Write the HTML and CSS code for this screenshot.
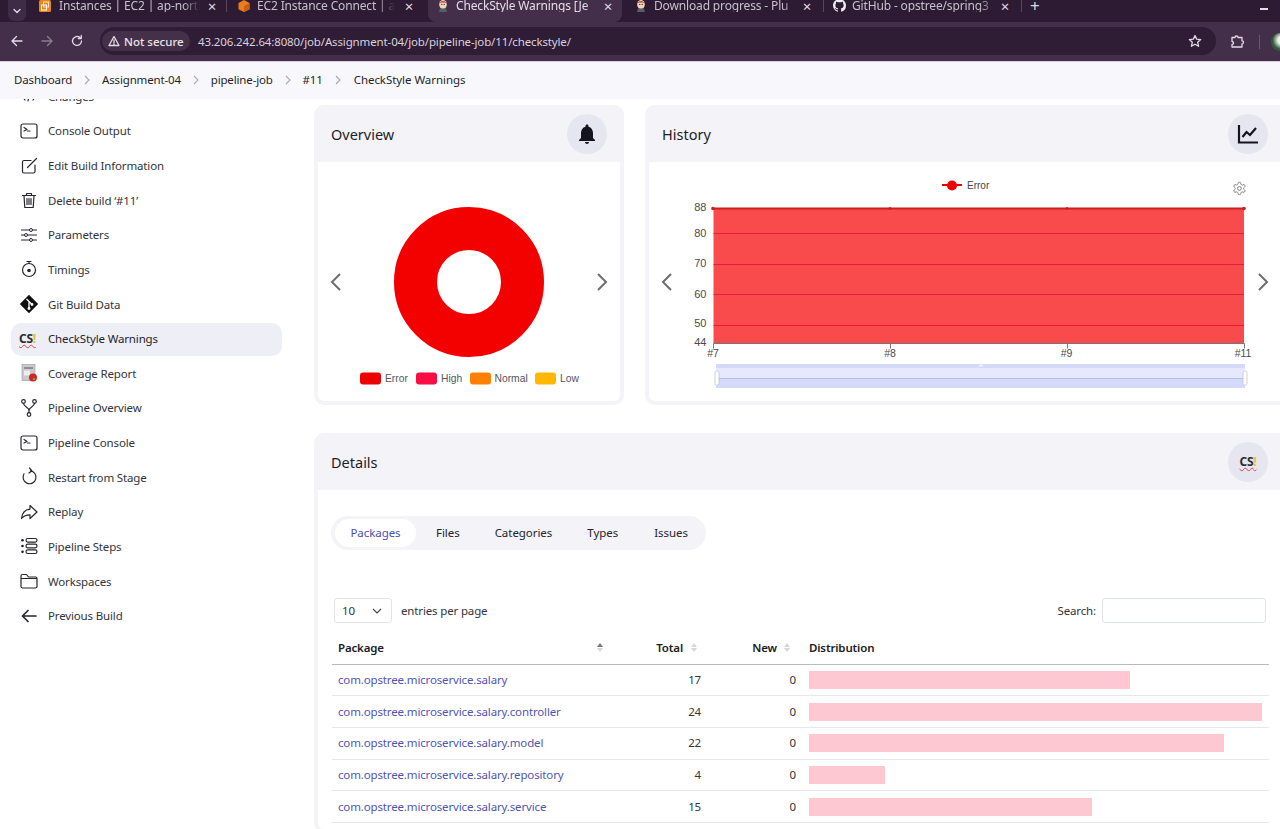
FILE: index.html
```html
<!DOCTYPE html>
<html lang="en">
<head>
<meta charset="utf-8">
<title>CheckStyle Warnings</title>
<link rel="stylesheet" href="styles.css">
</head>
<body>
<header class="chrome">
  <div class="tabstrip">
    <span class="tablist-btn"><svg width="10" height="10" viewBox="0 0 10 10"><path d="M2 3.5 5 6.5 8 3.5" class="s-light"/></svg></span>
    <div class="tab tab-1">
      <svg class="fav" viewBox="0 0 12 12"><rect width="12" height="12" rx="1.5" fill="#e8861c"/><rect x="4.5" y="2" width="5" height="5" fill="none" stroke="#fbe3c2"/><rect x="2.5" y="5" width="5" height="5" fill="none" stroke="#fff"/></svg>
      <span class="tab-title">Instances | EC2 | ap-north</span><span class="tab-x">×</span>
    </div>
    <i class="tab-sep"></i>
    <div class="tab tab-2">
      <svg class="fav" viewBox="0 0 12 12"><path d="M6 0 11.5 3v6.2L6 12 .5 9.2V3z" fill="#ed7d1c"/><path d="M6 6 11.5 3v6.2L6 12z" fill="#c9600f"/></svg>
      <span class="tab-title">EC2 Instance Connect | a</span><span class="tab-x">×</span>
    </div>
    <div class="tab tab-3 tab-active">
      <svg class="fav" viewBox="0 0 12 12"><ellipse cx="6" cy="4.5" rx="3.8" ry="4.5" fill="#f0d6b5"/><path d="M2.5 3C3 .5 9 .5 9.5 3L8 2.5H4z" fill="#a33"/><path d="M3 8.5h6L10 12H2z" fill="#54606e"/><circle cx="4.8" cy="4.4" r=".6" fill="#222"/><circle cx="7.2" cy="4.4" r=".6" fill="#222"/></svg>
      <span class="tab-title">CheckStyle Warnings [Je</span><span class="tab-x">×</span>
    </div>
    <div class="tab tab-4">
      <svg class="fav" viewBox="0 0 12 12"><ellipse cx="6" cy="4.5" rx="3.8" ry="4.5" fill="#f0d6b5"/><path d="M2.5 3C3 .5 9 .5 9.5 3L8 2.5H4z" fill="#a33"/><path d="M3 8.5h6L10 12H2z" fill="#54606e"/><circle cx="4.8" cy="4.4" r=".6" fill="#222"/><circle cx="7.2" cy="4.4" r=".6" fill="#222"/></svg>
      <span class="tab-title">Download progress - Plu</span><span class="tab-x">×</span>
    </div>
    <i class="tab-sep"></i>
    <div class="tab tab-5">
      <svg class="fav fav-gh" viewBox="0 0 16 16"><path fill="#eee" d="M8 0C3.58 0 0 3.58 0 8c0 3.54 2.29 6.53 5.47 7.59.4.07.55-.17.55-.38 0-.19-.01-.82-.01-1.49-2.01.37-2.53-.49-2.69-.94-.09-.23-.48-.94-.82-1.13-.28-.15-.68-.52-.01-.53.63-.01 1.08.58 1.23.82.72 1.21 1.87.87 2.33.66.07-.52.28-.87.51-1.07-1.78-.2-3.64-.89-3.64-3.95 0-.87.31-1.59.82-2.15-.08-.2-.36-1.02.08-2.12 0 0 .67-.21 2.2.82.64-.18 1.32-.27 2-.27s1.36.09 2 .27c1.53-1.04 2.2-.82 2.2-.82.44 1.1.16 1.92.08 2.12.51.56.82 1.27.82 2.15 0 3.07-1.87 3.75-3.65 3.95.29.25.54.73.54 1.48 0 1.07-.01 1.93-.01 2.2 0 .21.15.46.55.38A8.013 8.013 0 0 0 16 8c0-4.42-3.58-8-8-8z"/></svg>
      <span class="tab-title">GitHub - opstree/spring3</span><span class="tab-x">×</span>
    </div>
    <i class="tab-sep"></i>
    <span class="tab-new">+</span>
    <i class="win-min"></i>
  </div>
  <div class="toolbar">
    <svg class="tb-ico" width="14" height="14" viewBox="0 0 14 14"><path d="M12 7H2M6.5 2.5 2 7l4.5 4.5" class="s-light"/></svg>
    <svg class="tb-ico tb-fwd" width="14" height="14" viewBox="0 0 14 14"><path d="M2 7h10M7.500 2.500 12 7l-4.500 4.500" class="s-dim"/></svg>
    <svg class="tb-ico" width="14" height="14" viewBox="0 0 14 14"><path d="M11.500 7A4.500 4.500 0 1 1 10 3.600M11.300 1.500v3h-3" class="s-light"/></svg>
    <div class="omnibox">
      <span class="chip"><svg width="12" height="12" viewBox="0 0 12 12"><path d="M6 1.500 11 10.500H1zM6 5v2.800M6 8.800v.7" class="s-light"/></svg>Not secure</span>
      <span class="url">43.206.242.64:8080/job/Assignment-04/job/pipeline-job/11/checkstyle/</span>
      <svg class="star" width="14" height="14" viewBox="0 0 14 14"><path d="M7 1.500 8.700 5.200l4 .4-3 2.700.9 4L7 10.200l-3.600 2.100.9-4-3-2.700 4-.4z" class="s-light"/></svg>
    </div>
    <svg class="ext" width="16" height="16" viewBox="0 0 16 16"><path d="M3 3.500h3a1.500 1.500 0 0 1 3 0h4v3.300a1.500 1.500 0 0 1 0 3V13H3v-2.500a1.500 1.500 0 0 0 0-3z" class="s-light"/></svg>
    <i class="tb-sep"></i>
    <span class="avatar"></span>
  </div>
</header>

<nav class="crumbs">
  <a class="crumb">Dashboard</a><span class="sepch"><svg width="6" height="10" viewBox="0 0 6 10"><path d="M1 1l4 4-4 4"/></svg></span>
  <a class="crumb">Assignment-04</a><span class="sepch"><svg width="6" height="10" viewBox="0 0 6 10"><path d="M1 1l4 4-4 4"/></svg></span>
  <a class="crumb">pipeline-job</a><span class="sepch"><svg width="6" height="10" viewBox="0 0 6 10"><path d="M1 1l4 4-4 4"/></svg></span>
  <a class="crumb">#11</a><span class="sepch sepch-last"><svg width="6" height="10" viewBox="0 0 6 10"><path d="M1 1l4 4-4 4"/></svg></span>
  <a class="crumb crumb-last">CheckStyle Warnings</a>
</nav>

<div class="page">
  <aside class="side">
    <ul class="menu">
      <li class="item"><svg class="ico" viewBox="0 0 20 20"><path d="M6 6 3 10l3 4M14 6l3 4-3 4M11 5 9 15" class="s-dark"/></svg>Changes</li>
      <li class="item"><svg class="ico" viewBox="0 0 20 20"><rect x="2" y="3" width="16" height="14" rx="2" class="s-dark"/><path d="M5 6.500 8 8.500 5 10M8.500 10H11" class="s-dark"/></svg>Console Output</li>
      <li class="item"><svg class="ico" viewBox="0 0 20 20"><path d="M12 4.500H5a1.500 1.500 0 0 0-1.500 1.500v9.500A1.500 1.500 0 0 0 5 17h9.500a1.500 1.500 0 0 0 1.500-1.500V9M8.500 11.500 17.500 2.500" class="s-dark"/></svg>Edit Build Information</li>
      <li class="item"><svg class="ico" viewBox="0 0 20 20"><path d="M3.500 5.500h13M7.500 5.500V3.500h5v2M5 5.500 5.800 17.500h8.400L15 5.500M8 8.500v6M10 8.500v6M12 8.500v6" class="s-dark"/></svg>Delete build ‘#11’</li>
      <li class="item"><svg class="ico" viewBox="0 0 20 20"><path d="M2.500 5h15M2.500 10h15M2.500 15h15" class="s-dark"/><circle cx="12" cy="5" r="1.500" class="dot"/><circle cx="7" cy="10" r="1.500" class="dot"/><circle cx="12" cy="15" r="1.500" class="dot"/></svg>Parameters</li>
      <li class="item"><svg class="ico" viewBox="0 0 20 20"><circle cx="10" cy="11" r="6.500" class="s-dark"/><path d="M8 2.500h4M10 2.500v2" class="s-dark"/><circle cx="10" cy="11.500" r="1.800" fill="#222"/></svg>Timings</li>
      <li class="item"><svg class="ico" viewBox="0 0 20 20"><path d="M10 .8 19.200 10 10 19.200.8 10z" fill="#111"/><path d="M7.500 5 13 10.500M10 8v6.500" stroke="#fff" stroke-width="1.300" fill="none"/><circle cx="10" cy="14.500" r="1.400" fill="#fff"/><circle cx="13" cy="10.500" r="1.400" fill="#fff"/></svg>Git Build Data</li>
      <li class="item item-active"><span class="cs cs-side">CS<b>!</b></span>CheckStyle Warnings</li>
      <li class="item"><svg class="ico" viewBox="0 0 20 20"><rect x="3" y="1.500" width="13" height="16" fill="#c9c9c9" stroke="#999" stroke-width=".6"/><rect x="5" y="4" width="9" height="2" fill="#8f8f8f"/><rect x="5" y="7.500" width="6" height="5" fill="#eee"/><circle cx="14" cy="14.500" r="4" fill="#d3222a"/><circle cx="15" cy="16" r="1.300" fill="#7a9b30"/></svg>Coverage Report</li>
      <li class="item"><svg class="ico" viewBox="0 0 20 20"><circle cx="4.500" cy="3.500" r="1.800" class="s-dark"/><circle cx="15.500" cy="3.500" r="1.800" class="s-dark"/><circle cx="10" cy="16.500" r="1.800" class="s-dark"/><path d="M4.500 5.300C4.500 9 10 9 10 12.500v2.200M15.500 5.300C15.500 9 10 9 10 12.500" class="s-dark"/></svg>Pipeline Overview</li>
      <li class="item"><svg class="ico" viewBox="0 0 20 20"><rect x="2" y="3" width="16" height="14" rx="2" class="s-dark"/><path d="M5 6.500 8 8.500 5 10M8.500 10H11" class="s-dark"/></svg>Pipeline Console</li>
      <li class="item"><svg class="ico" viewBox="0 0 20 20"><path d="M11.500 3.800A6.500 6.500 0 1 1 5 6.800M10.500 1 13 3.800 10 6" class="s-dark"/></svg>Restart from Stage</li>
      <li class="item"><svg class="ico" viewBox="0 0 20 20"><path d="M11 3.500 18 10l-7 6.500v-3.700C7 12.800 4.500 14 2.500 16.500 3 11 6 7.800 11 7.200z" class="s-dark"/></svg>Replay</li>
      <li class="item"><svg class="ico" viewBox="0 0 20 20"><rect x="7" y="2.500" width="11" height="3.600" rx="1.800" class="s-dark"/><rect x="7" y="8.200" width="11" height="3.600" rx="1.800" class="s-dark"/><rect x="7" y="13.900" width="11" height="3.600" rx="1.800" class="s-dark"/><circle cx="3.500" cy="4.300" r="1.300" fill="#222"/><circle cx="3.500" cy="10" r="1.300" fill="#222"/><circle cx="3.500" cy="15.700" r="1.300" fill="#222"/></svg>Pipeline Steps</li>
      <li class="item"><svg class="ico" viewBox="0 0 20 20"><path d="M2 5a1.500 1.500 0 0 1 1.500-1.500h4L9.500 6h7A1.500 1.500 0 0 1 18 7.500v8a1.500 1.500 0 0 1-1.500 1.500h-13A1.500 1.500 0 0 1 2 15.500zM2 7.500h16" class="s-dark"/></svg>Workspaces</li>
      <li class="item"><svg class="ico" viewBox="0 0 20 20"><path d="M17 10H3.500M9 4.500 3.500 10 9 15.500" class="s-dark s-thick"/></svg>Previous Build</li>
    </ul>
  </aside>

  <main class="main">
    <div class="top-cards">
      <section class="card card-overview">
        <div class="card-head"><h2>Overview</h2>
          <span class="round"><svg width="24" height="24" viewBox="0 0 24 24"><path fill="#14141f" d="M12 22c1.100 0 2-.9 2-2h-4c0 1.100.9 2 2 2zm6-6v-5c0-3.070-1.630-5.640-4.500-6.320V4c0-.83-.67-1.500-1.500-1.500s-1.500.67-1.500 1.500v.68C7.630 5.360 6 7.920 6 11v5l-2 2v1h16v-1l-2-2z"/></svg></span>
        </div>
        <div class="card-body">
          <svg class="chart" width="302" height="239" viewBox="318 162 302 239">
            <circle cx="469" cy="282" r="53.500" fill="none" stroke="#f30000" stroke-width="43"/>
            <rect x="360" y="372.500" width="21" height="12" rx="3" fill="#ee0000"/><text x="385" y="382" class="lg">Error</text>
            <rect x="416" y="372.500" width="21" height="12" rx="3" fill="#f80d45"/><text x="441" y="382" class="lg">High</text>
            <rect x="470" y="372.500" width="21" height="12" rx="3" fill="#ff8000"/><text x="494.500" y="382" class="lg">Normal</text>
            <rect x="535" y="372.500" width="21" height="12" rx="3" fill="#ffb700"/><text x="560" y="382" class="lg">Low</text>
          </svg>
          <svg class="chev chev-l" width="14" height="20" viewBox="0 0 14 20"><path d="M11 2 3 10l8 8"/></svg>
          <svg class="chev chev-r" width="14" height="20" viewBox="0 0 14 20"><path d="M3 2l8 8-8 8"/></svg>
        </div>
      </section>
      <section class="card card-history">
        <div class="card-head"><h2>History</h2>
          <span class="round round-hist"><svg width="24" height="24" viewBox="0 0 24 24"><path d="M3 3v17.500h19M6.500 15l4-5 3.500 3 6-7" fill="none" stroke="#14141f" stroke-width="2.200"/></svg></span>
        </div>
        <div class="card-body">
          <svg class="chart" width="631" height="239" viewBox="649 162 631 239">
            <path d="M942 185h20" stroke="#e60000" stroke-width="2"/><circle cx="952" cy="185.500" r="5" fill="#ee0000"/>
            <text x="967" y="189" class="lg lg-s">Error</text>
            <g transform="translate(1232 181) scale(.62)" fill="none" stroke="#777" stroke-width="1.500"><path d="M12.220 2h-.44a2 2 0 0 0-2 2v.18a2 2 0 0 1-1 1.730l-.43.25a2 2 0 0 1-2 0l-.15-.08a2 2 0 0 0-2.730.73l-.22.38a2 2 0 0 0 .73 2.730l.15.1a2 2 0 0 1 1 1.720v.51a2 2 0 0 1-1 1.740l-.15.09a2 2 0 0 0-.73 2.730l.22.38a2 2 0 0 0 2.730.73l.15-.08a2 2 0 0 1 2 0l.43.25a2 2 0 0 1 1 1.730V20a2 2 0 0 0 2 2h.44a2 2 0 0 0 2-2v-.18a2 2 0 0 1 1-1.730l.43-.25a2 2 0 0 1 2 0l.15.08a2 2 0 0 0 2.730-.73l.22-.39a2 2 0 0 0-.73-2.730l-.15-.08a2 2 0 0 1-1-1.740v-.5a2 2 0 0 1 1-1.740l.15-.09a2 2 0 0 0 .73-2.730l-.22-.38a2 2 0 0 0-2.730-.73l-.15.08a2 2 0 0 1-2 0l-.43-.25a2 2 0 0 1-1-1.730V4a2 2 0 0 0-2-2z"/><circle cx="12" cy="12" r="3"/></g>
            <rect x="713.500" y="208" width="530.500" height="135.500" fill="#f94b4c"/>
            <path d="M713.500 233.500H1244M713.500 264.500H1244M713.500 294.500H1244M713.500 325.500H1244" stroke="#ee1a3c" stroke-width="1"/>
            <path d="M713 208.500H1244" stroke="#c92020" stroke-width="2"/>
            <path d="M713.500 343.500H1244.500M713.500 343.500v5M890.500 343.500v5M1067.500 343.500v5M1244.500 343.500v5" stroke="#777" stroke-width="1" fill="none"/>
            <circle cx="713" cy="208.500" r="1.800" fill="#c92020"/><circle cx="890" cy="208.500" r="1.500" fill="#c92020"/><circle cx="1067" cy="208.500" r="1.500" fill="#c92020"/><circle cx="1244" cy="208.500" r="1.800" fill="#c92020"/>
            <g class="ax ax-y"><text x="706.500" y="211">88</text><text x="706.500" y="237">80</text><text x="706.500" y="267">70</text><text x="706.500" y="298">60</text><text x="706.500" y="327">50</text><text x="706.500" y="346">44</text></g>
            <g class="ax ax-x"><text x="713" y="357">#7</text><text x="890" y="357">#8</text><text x="1066.500" y="357">#9</text><text x="1243" y="357">#11</text></g>
            <rect x="716" y="364" width="529" height="24" fill="#d5dafb"/>
            <rect x="716" y="368" width="529" height="10" fill="#e6e9fe"/>
            <path d="M716 378.500H1245" stroke="#b6bdea"/>
            <rect x="979" y="364.500" width="4" height="2" fill="#eef0ff"/>
            <rect x="715" y="371" width="4" height="14" rx="1.500" fill="#fff" stroke="#b8bdd0" stroke-width=".7"/>
            <rect x="1243" y="371" width="4" height="14" rx="1.500" fill="#fff" stroke="#b8bdd0" stroke-width=".7"/>
          </svg>
          <svg class="chev chev-l chev-hl" width="14" height="20" viewBox="0 0 14 20"><path d="M11 2 3 10l8 8"/></svg>
          <svg class="chev chev-r chev-hr" width="14" height="20" viewBox="0 0 14 20"><path d="M3 2l8 8-8 8"/></svg>
        </div>
      </section>
    </div>

    <section class="card card-details">
      <div class="card-head"><h2>Details</h2>
        <span class="round round-det"><span class="cs">CS<b>!</b></span></span>
      </div>
      <div class="details-body">
        <div class="pills">
          <a class="pill pill-active">Packages</a><a class="pill">Files</a><a class="pill">Categories</a><a class="pill">Types</a><a class="pill">Issues</a>
        </div>
        <div class="controls">
          <div class="entries"><span class="select">10<svg width="10" height="6" viewBox="0 0 10 6"><path d="M1 1l4 4 4-4" fill="none" stroke="#444" stroke-width="1.100"/></svg></span><span>entries per page</span></div>
          <div class="search"><span>Search:</span><span class="input"></span></div>
        </div>
        <table class="grid">
          <colgroup><col class="c-pkg"><col class="c-tot"><col class="c-new"><col></colgroup>
          <thead><tr>
            <th><span class="thf">Package<span class="sort sort-asc"><i></i><i></i></span></span></th>
            <th class="num"><span class="thr">Total<span class="sort"><i></i><i></i></span></span></th>
            <th class="num"><span class="thr thr-new">New<span class="sort"><i></i><i></i></span></span></th>
            <th>Distribution</th>
          </tr></thead>
          <tbody>
            <tr><td><a>com.opstree.microservice.salary</a></td><td class="num">17</td><td class="num">0</td><td><div class="bar" style="width:70.83%"></div></td></tr>
            <tr><td><a>com.opstree.microservice.salary.controller</a></td><td class="num">24</td><td class="num">0</td><td><div class="bar" style="width:100%"></div></td></tr>
            <tr><td><a>com.opstree.microservice.salary.model</a></td><td class="num">22</td><td class="num">0</td><td><div class="bar" style="width:91.67%"></div></td></tr>
            <tr><td><a>com.opstree.microservice.salary.repository</a></td><td class="num">4</td><td class="num">0</td><td><div class="bar" style="width:16.67%"></div></td></tr>
            <tr><td><a>com.opstree.microservice.salary.service</a></td><td class="num">15</td><td class="num">0</td><td><div class="bar" style="width:62.5%"></div></td></tr>
          </tbody>
        </table>
      </div>
    </section>
  </main>
</div>
</body>
</html>
```

FILE: styles.css
```css
* { box-sizing: border-box; }
html, body { margin: 0; height: 829px; overflow: hidden; background: #fff; }
body { font-family: "Noto Sans", "Open Sans", sans-serif; font-size: 11.500px; letter-spacing: -.15px; color: #2b2b33; }
ul { list-style: none; margin: 0; padding: 0; }
h2 { margin: 0; font-weight: 400; font-size: 14.500px; letter-spacing: 0; color: #1d1d28; }

.s-light, .s-dim, .s-dark { fill: none; stroke-width: 1.300; stroke-linecap: round; stroke-linejoin: round; }
.s-light { stroke: #e3dbe6; }
.s-dim { stroke: #8b7d90; }
.s-dark { stroke: #26262e; stroke-width: 1.200; }
.s-thick { stroke-width: 1.700; }
.dot { fill: #fff; stroke: #26262e; stroke-width: 1; }

/* Browser chrome */
.chrome { height: 62px; background: #442f4b; border-bottom: 1px solid #d9cbdc; }
.tabstrip { height: 22px; background: #2c1b33; display: flex; align-items: flex-start; color: #c8bfcd; font-size: 12px; position: relative; }
.tablist-btn { width: 18px; height: 21px; margin-left: 8px; background: #3e2b45; border-radius: 0 0 6px 6px; display: flex; align-items: center; justify-content: center; }
.tab { display: flex; align-items: flex-start; height: 22px; line-height: 12px; flex: none; }
.tab .fav { width: 12px; height: 12px; flex: none; margin-right: 8px; }
.tab .fav-gh { width: 13px; height: 13px; margin-top: -1px; }
.tab-title { overflow: hidden; white-space: nowrap; flex: none; -webkit-mask-image: linear-gradient(90deg, #000 88%, transparent); mask-image: linear-gradient(90deg, #000 88%, transparent); }
.tab-x { font-size: 15px; color: #e0d8e4; width: 10px; text-align: center; margin-left: auto; }
.tab-sep { width: 1px; height: 12px; background: #5a4661; flex: none; }
.tab-1 { width: 187px; margin-left: 13px; padding-right: 9px; }
.tab-1 .tab-title { width: 141px; }
.tab-2 { width: 201px; padding-left: 11px; padding-right: 14px; }
.tab-2 .fav { margin-right: 7px; }
.tab-2 .tab-title { width: 138px; }
.tab-3 { width: 194px; padding-left: 9px; padding-right: 9px; background: #442f4b; color: #e4dde8; border-radius: 0 0 8px 8px; }
.tab-3 .fav { margin-right: 7px; }
.tab-3 .tab-title { width: 146px; }
.tab-4 { width: 201px; padding-left: 13px; padding-right: 11px; }
.tab-4 .fav { margin-right: 7px; }
.tab-4 .tab-title { width: 146px; }
.tab-5 { width: 197px; padding-left: 9px; padding-right: 11px; }
.tab-5 .fav { margin-right: 6px; }
.tab-5 .tab-title { width: 145px; }
.tab-new { font-size: 17px; line-height: 12px; margin-left: 8px; color: #ddd5e1; }
.win-min { width: 8px; height: 1.500px; background: #e6dfe9; position: absolute; left: 1260px; top: 8px; }

.toolbar { height: 39px; display: flex; align-items: center; padding-left: 10px; }
.tb-ico { margin-right: 16px; flex: none; margin-top: -1px; }
.omnibox { width: 1116px; height: 28px; margin-top: -1px; border-radius: 14px; background: #2f1c35; display: flex; align-items: center; padding-left: 2px; flex: none; color: #e0d9e4; }
.chip { width: 88px; height: 20px; background: #443049; border-radius: 10px; display: flex; align-items: center; gap: 4px; padding-left: 6px; font-size: 11.500px; letter-spacing: 0; color: #eae4ec; font-weight: 500; white-space: nowrap; }
.url { margin-left: 8px; font-size: 11.500px; letter-spacing: -.134px; color: #d9d2dd; white-space: nowrap; }
.star { margin-left: auto; margin-right: 14px; }
.ext { margin-left: 13px; flex: none; }
.tb-sep { width: 1px; height: 14px; background: #6a5770; margin-left: 14px; flex: none; }
.avatar { width: 18px; height: 18px; border-radius: 50%; margin-left: 11px; background: radial-gradient(circle at 60% 40%, #f1f1e8 25%, #2f5c3a 60%); flex: none; }

/* Breadcrumb */
.crumbs { height: 37px; background: #f8f8fc; display: flex; align-items: center; padding: 0 0 2px 14px; font-size: 11.500px; position: relative; z-index: 2; color: #1f1f29; }
.sepch { width: 29.800px; display: flex; justify-content: center; }
.sepch-last { width: 31px; }
.crumb-last { letter-spacing: -.05px; }
.sepch path { fill: none; stroke: #a9a9b3; stroke-width: 1.100; }

/* Layout */
.page { display: flex; height: 730px; overflow: hidden; }
.side { width: 314px; flex: none; }
.menu { display: flex; flex-direction: column; gap: 1.640px; margin-top: -18.700px; }
.item { height: 33px; display: flex; align-items: center; gap: 9px; margin-left: 11px; width: 271px; padding: 0 0 1px 8px; border-radius: 10px; color: #33333d; white-space: nowrap; }
.item-active { background: #eeeef6; color: #23232c; }
.ico { width: 20px; height: 20px; flex: none; }
.main { flex: none; width: 966px; padding-top: 6px; overflow: hidden; }
.top-cards { display: grid; grid-template-columns: 310px 660px; column-gap: 21px; width: 991px; }

/* Cards */
.card { border: 4px solid #f3f3f8; border-top: 0; border-radius: 10px; background: #fff; }
.card-head { height: 57px; margin: 0 -4px; padding: 0 17px; background: #f3f3f8; border-radius: 10px 10px 0 0; display: flex; align-items: center; justify-content: space-between; }
.card-body { position: relative; height: 239px; }
.chart { display: block; }
.lg { font-family: "Liberation Sans", sans-serif; font-size: 10.300px; letter-spacing: 0; fill: #55555c; }
.lg-s { font-size: 10px; fill: #444; }
.ax { font-family: "Liberation Sans", sans-serif; font-size: 11px; letter-spacing: 0; fill: #4a4a4a; }
.ax-y { text-anchor: end; }
.ax-x { text-anchor: middle; font-size: 10.500px; }
.round { width: 40px; height: 40px; border-radius: 50%; background: #e6e6f0; display: flex; align-items: center; justify-content: center; flex: none; }
.card-history .card-head { padding-right: 37px; }

.chev { position: absolute; top: 50%; margin-top: -10px; fill: none; stroke: #6c6c72; stroke-width: 2; }
.chev-l { left: 11px; }
.chev-r { left: 277px; }
.chev-hl { left: 11px; }
.chev-hr { left: 607px; }

.cs { font-size: 12px; font-weight: 700; color: #2c2c34; letter-spacing: -.3px; line-height: 14px; display: inline-block; text-decoration: underline wavy #e3403a 1px; text-underline-offset: 1px; }
.cs b { color: #f2c230; }
.cs-side { width: 20px; flex: none; }

/* Details */
.card-details { width: 991px; margin-top: 28px; min-height: 400px; }
.card-details .card-head { padding-right: 37px; }
.details-body { padding: 26px 0 0 13px; width: 951px; }
.pills { display: inline-flex; height: 34px; align-items: center; border-radius: 17px; background: #f3f3f8; padding-left: 4px; width: 375px; color: #24242e; vertical-align: top; letter-spacing: -.05px; }
.pill { height: 28px; line-height: 28px; border-radius: 14px; white-space: nowrap; }
.pill:nth-child(1) { width: 81px; text-align: center; background: #fff; color: #4a50b0; margin-right: 20px; }
.pill:nth-child(2) { margin-right: 35px; }
.pill:nth-child(3) { margin-right: 35px; }
.pill:nth-child(4) { margin-right: 36px; }
.controls { display: flex; justify-content: space-between; align-items: center; margin-top: 48px; padding-left: 3px; height: 25px; width: 935px; color: #33333d; }
.entries, .search { display: flex; align-items: center; }
.entries { gap: 9px; }
.search { gap: 6px; }
.select { width: 58px; height: 25px; border: 1px solid #e3e3ea; border-radius: 3px; display: flex; align-items: center; justify-content: space-between; padding: 0 9px 0 7px; }
.input { width: 164px; height: 25px; border: 1px solid #dfe3ea; border-radius: 3px; background: #fff; }

.grid { width: 937px; margin: 9px 0 0 1px; table-layout: fixed; border-collapse: collapse; color: #33333d; }
.c-pkg { width: 278px; }
.c-tot { width: 97px; }
.c-new { width: 95px; }
.grid th { height: 32px; text-align: left; font-weight: 600; color: #1b1b24; padding: 0 6px; border-bottom: 1.500px solid #b9b9be; }
.grid th:last-child { padding-left: 7px; }
.grid td { height: 31.700px; padding: 0 6px 1px; border-bottom: 1px solid #e6e6ec; white-space: nowrap; }
.grid td:last-child { padding: 0 7px; }
.grid a { color: #4f55b5; }
.grid .num { text-align: right; }
.thf { display: flex; justify-content: space-between; padding-right: 1px; align-items: center; }
.thr { display: flex; justify-content: flex-end; align-items: center; gap: 8px; margin-right: 4px; }
.thr-new { gap: 7px; margin-right: 6px; }
.sort { display: inline-flex; flex-direction: column; gap: 1px; }
.sort i { width: 0; height: 0; border-left: 3px solid transparent; border-right: 3px solid transparent; border-bottom: 4px solid #d6d6dc; }
.sort i:last-child { border-bottom: 0; border-top: 4px solid #d6d6dc; }
.sort-asc i:first-child { border-bottom-color: #777; }
.bar { height: 18px; background: #fec8d2; }
```
